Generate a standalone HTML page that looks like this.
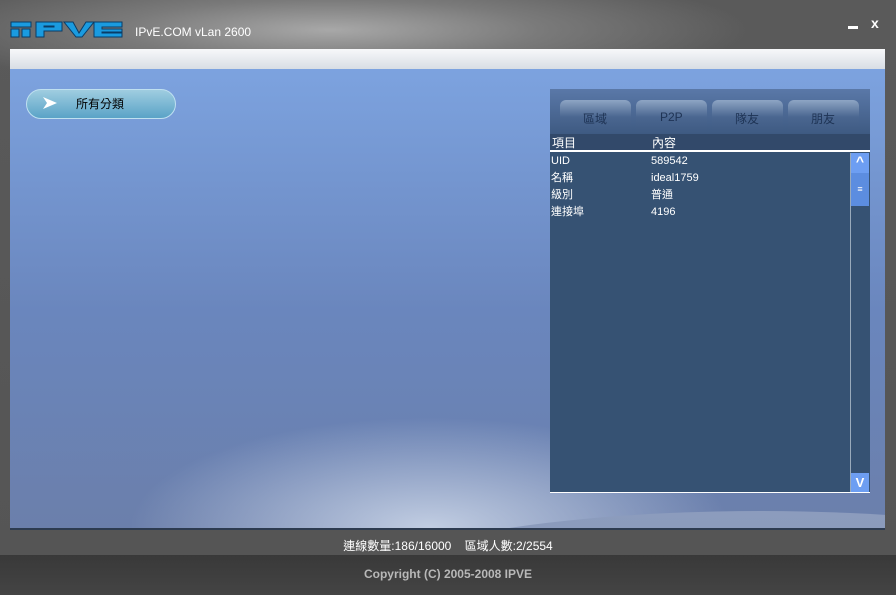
<html><head><style>
html,body{margin:0;width:896px;height:595px;overflow:hidden}
body{background:#535353;font-family:"Liberation Sans","Noto Sans CJK TC",sans-serif;position:relative}
.a{position:absolute}
</style></head><body>
<div class="a" style="left:0;top:0;width:896px;height:555px;background:radial-gradient(ellipse 420px 60px at 330px 30px,#a8a8a8,#7a7a7a 50%,rgba(85,85,85,0) 100%),linear-gradient(#5a5a5a,#555)"></div>
<svg class="a" style="left:10px;top:19px" width="114" height="20" viewBox="0 0 114 20">
<g fill="#1a9be0" stroke="#0a3c66" stroke-width="1">
<rect x="1" y="3" width="20" height="5"/><rect x="1" y="10" width="8" height="8"/><rect x="12" y="10" width="8" height="8"/>
<path d="M26 3h26v9h-18v6h-8zM34 8h10v-1h-10z"/>
<path d="M54 3h9l6 11 7-11h8l-12 15h-6z"/>
<path d="M84 3h28v5h-20v2h20v3h-20v1h20v4h-28z"/>
</g></svg>
<div class="a" style="left:135px;top:25px;color:#fff;font-size:12px">IPvE.COM vLan 2600</div>
<div class="a" style="left:848px;top:26px;width:10px;height:3px;background:#fff"></div>
<div class="a" style="left:871px;top:15px;color:#fff;font-size:14px;font-weight:bold">x</div>
<div class="a" style="left:10px;top:49px;width:875px;height:479px;background:radial-gradient(ellipse 300px 110px at 420px 479px,rgba(215,225,240,.8),rgba(200,210,230,0) 100%),linear-gradient(#7ea5e2,#6a86bd 55%,#6b7fab);border-bottom:2px solid #2d3b50;overflow:hidden">
<div class="a" style="left:0;top:0;width:875px;height:20px;background:linear-gradient(#f7f8fa,#d8dde4)"></div>
<div class="a" style="left:300px;top:462px;width:900px;height:200px;border-radius:50%;background:linear-gradient(#8c9cbd,#7d8fb5)"></div>
</div>
<div class="a" style="left:26px;top:89px;width:148px;height:28px;border:1px solid #bfe0f0;border-radius:15px;background:linear-gradient(#9fcde0,#5aa3c7)"></div>
<svg class="a" style="left:42px;top:96px" width="16" height="14"><path d="M1 1L15 7L1 13L5 7Z" fill="#fff"/></svg>
<div class="a" style="left:76px;top:95px;font-size:12px;color:#000">所有分類</div>
<div class="a" style="left:550px;top:89px;width:320px;height:404px;background:#365273">
<div class="a" style="left:0;top:0;width:320px;height:45px;background:linear-gradient(#5a78a8,#3e5a82)"></div>
</div>
<div class="a" style="left:560px;top:100px;width:71px;height:34px;border-radius:6px 6px 0 0;background:linear-gradient(#8ea5c4,#4a6690 50%,#3e5a82)"></div>
<div class="a" style="left:636px;top:100px;width:71px;height:34px;border-radius:6px 6px 0 0;background:linear-gradient(#8ea5c4,#4a6690 50%,#3e5a82)"></div>
<div class="a" style="left:712px;top:100px;width:71px;height:34px;border-radius:6px 6px 0 0;background:linear-gradient(#8ea5c4,#4a6690 50%,#3e5a82)"></div>
<div class="a" style="left:788px;top:100px;width:71px;height:34px;border-radius:6px 6px 0 0;background:linear-gradient(#8ea5c4,#4a6690 50%,#3e5a82)"></div>
<div class="a" style="left:583px;top:110px;font-size:12px;color:#1e3354">區域</div>
<div class="a" style="left:660px;top:110px;font-size:12px;color:#1e3354">P2P</div>
<div class="a" style="left:735px;top:110px;font-size:12px;color:#1e3354">隊友</div>
<div class="a" style="left:811px;top:110px;font-size:12px;color:#1e3354">朋友</div>
<div class="a" style="left:550px;top:134px;width:320px;height:16px;background:#32496a"></div>
<div class="a" style="left:552px;top:134px;font-size:12px;color:#fff">項目</div>
<div class="a" style="left:652px;top:134px;font-size:12px;color:#fff">內容</div>
<div class="a" style="left:550px;top:150px;width:320px;height:2px;background:#fff"></div>
<div class="a" style="left:551px;top:153px;font-size:11px;color:#fff;line-height:17px">UID<br>名稱<br>級別<br>連接埠</div>
<div class="a" style="left:651px;top:153px;font-size:11px;color:#fff;line-height:17px">589542<br>ideal1759<br>普通<br>4196</div>
<div class="a" style="left:850px;top:153px;width:1px;height:340px;background:#9ab"></div>
<div class="a" style="left:851px;top:153px;width:18px;height:20px;background:#6d9ef2;color:#fff;font-size:14px;font-weight:bold;text-align:center">^</div>
<div class="a" style="left:851px;top:173px;width:18px;height:33px;background:#5c8de0;color:#fff;font-size:9px;text-align:center;line-height:33px">≡</div>
<div class="a" style="left:851px;top:473px;width:18px;height:20px;background:#6d9ef2;color:#fff;font-size:13px;font-weight:bold;text-align:center;line-height:20px">V</div>
<div class="a" style="left:550px;top:492px;width:320px;height:1px;background:#fff"></div>
<div class="a" style="left:0;top:537px;width:896px;text-align:center;font-size:12px;color:#fff">連線數量:186/16000&nbsp;&nbsp;&nbsp; 區域人數:2/2554</div>
<div class="a" style="left:0;top:555px;width:896px;height:40px;background:linear-gradient(#393939,#444)"></div>
<div class="a" style="left:0;top:567px;width:896px;text-align:center;font-size:12px;font-weight:bold;color:#b8b8b8">Copyright (C) 2005-2008 IPVE</div>
</body></html>
